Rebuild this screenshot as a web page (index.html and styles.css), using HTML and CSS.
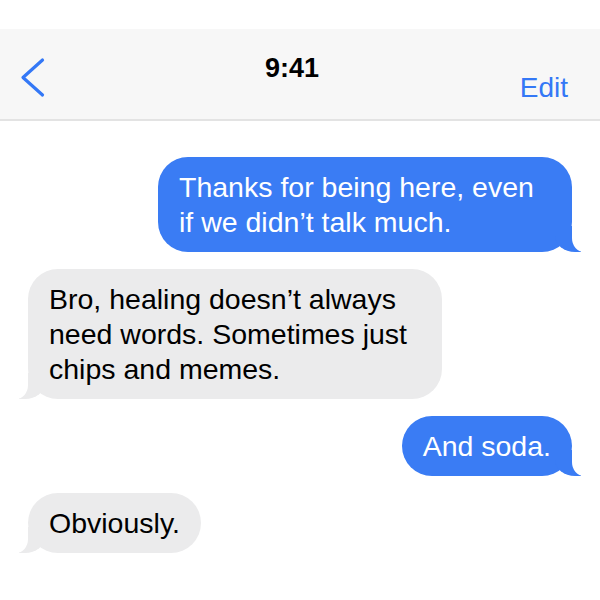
FILE: index.html
```html
<!DOCTYPE html>
<html lang="en">
<head>
  <meta charset="UTF-8">
  <meta name="viewport" content="width=device-width, initial-scale=1.0">
  <title>Messages</title>
  <link rel="stylesheet" href="styles.css">
</head>
<body>
  <div class="topbar">
    <button class="back" aria-label="Back">
      <svg width="30" height="44" viewBox="0 0 30 44">
        <polyline points="26.5,4 7,21.5 26.5,39" fill="none" stroke="#3478f6" stroke-width="3.2" stroke-linecap="round" stroke-linejoin="round"/>
      </svg>
    </button>
    <div class="time">9:41</div>
    <button class="edit">Edit</button>
  </div>

  <div class="thread">
    <div class="bubble out">Thanks for being here, even if we didn’t talk much.</div>
    <div class="bubble in">Bro, healing doesn’t always need words. Sometimes just chips and memes.</div>
    <div class="bubble out">And soda.</div>
    <div class="bubble in">Obviously.</div>
  </div>
</body>
</html>
```

FILE: styles.css
```css
body {
  font-family: 'Liberation Sans', Arial, sans-serif;
  background: #fff;
  color: #000;
  margin: 0;
  padding: 0;
}
.topbar {
  margin-top: 29px;
  height: 90px;
  background: #f7f7f7;
  border-bottom: 2px solid #e3e3e3;
  display: grid;
  grid-template-columns: 1fr auto 1fr;
  align-items: start;
  padding: 0 32px 0 16px;
}
.topbar button {
  background: none;
  border: none;
  padding: 0;
  font-family: inherit;
  cursor: pointer;
}
.back {
  justify-self: start;
  margin-top: 27px;
  line-height: 0;
}
.time {
  font-size: 27px;
  font-weight: bold;
  line-height: 1;
  margin-top: 26px;
}
.edit {
  justify-self: end;
  margin-top: 45px;
  font-size: 28px;
  line-height: 1;
  color: #3478f6;
}
.thread {
  display: flex;
  flex-direction: column;
  gap: 17px;
  padding: 36px 28px;
}
.bubble {
  position: relative;
  box-sizing: border-box;
  max-width: 414px;
  padding: 12.5px 21px;
  border-radius: 30px;
  font-size: 28.5px;
  line-height: 35px;
}
.bubble::before,
.bubble::after {
  content: "";
  position: absolute;
  bottom: 0;
}
.out {
  align-self: flex-end;
  background: #3a7cf4;
  color: #fff;
}
.out::before {
  right: -9px;
  width: 26px;
  height: 26px;
  background: #3a7cf4;
  border-bottom-left-radius: 20px 16px;
}
.out::after {
  right: -12px;
  width: 12px;
  height: 28px;
  background: #fff;
  border-bottom-left-radius: 12px 14px;
}
.in {
  align-self: flex-start;
  background: #ebebec;
}
.in::before {
  left: -9px;
  width: 26px;
  height: 26px;
  background: #ebebec;
  border-bottom-right-radius: 20px 16px;
}
.in::after {
  left: -12px;
  width: 12px;
  height: 28px;
  background: #fff;
  border-bottom-right-radius: 12px 14px;
}
```
